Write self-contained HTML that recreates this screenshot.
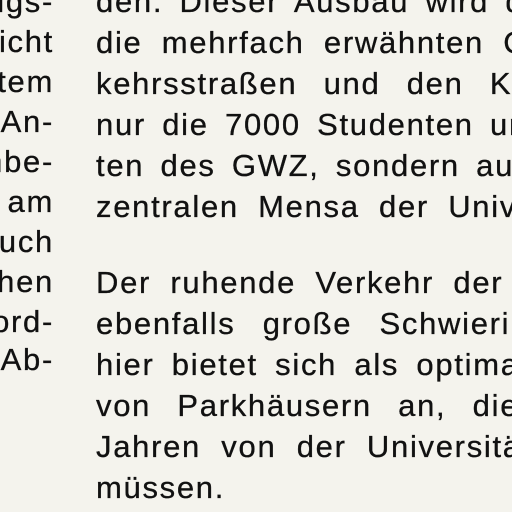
<!DOCTYPE html>
<html><head><meta charset="utf-8"><style>
html,body{margin:0;padding:0;width:512px;height:512px;overflow:hidden;background:#f4f3ed;}
.l,.r{position:absolute;white-space:nowrap;font-family:"Liberation Sans",sans-serif;font-size:31px;line-height:40px;color:#111;letter-spacing:1.7px;-webkit-text-stroke:0.3px #111;}
.l{right:458px;text-align:right;}
.r{left:96px;word-spacing:6px;}
</style></head><body>
<div class="l" style="top:-18px">igs-</div>
<div class="l" style="top:22px">icht</div>
<div class="l" style="top:62px">tem</div>
<div class="l" style="top:102px">An-</div>
<div class="l" style="top:142px">nbe-</div>
<div class="l" style="top:182px">am</div>
<div class="l" style="top:222px">uch</div>
<div class="l" style="top:262px">hen</div>
<div class="l" style="top:302px">ord-</div>
<div class="l" style="top:340px">Ab-</div>

<div class="r" style="top:-18px">den. Dieser Ausbau wird d</div>
<div class="r" style="top:23px;word-spacing:9px">die mehrfach erwähnten C</div>
<div class="r" style="top:64px;word-spacing:16px">kehrsstraßen und den K</div>
<div class="r" style="top:105px">nur die 7000 Studenten un</div>
<div class="r" style="top:146px">ten des GWZ, sondern auc</div>
<div class="r" style="top:187px;word-spacing:9px">zentralen Mensa der Univ</div>
<div class="r" style="top:263px;word-spacing:9px">Der ruhende Verkehr der</div>
<div class="r" style="top:304px;word-spacing:17px">ebenfalls große Schwieri</div>
<div class="r" style="top:345px;word-spacing:7px">hier bietet sich als optima</div>
<div class="r" style="top:386px;word-spacing:16px">von Parkhäusern an, die</div>
<div class="r" style="top:427px;word-spacing:10px">Jahren von der Universitä</div>
<div class="r" style="top:468px">müssen.</div>
</body></html>
